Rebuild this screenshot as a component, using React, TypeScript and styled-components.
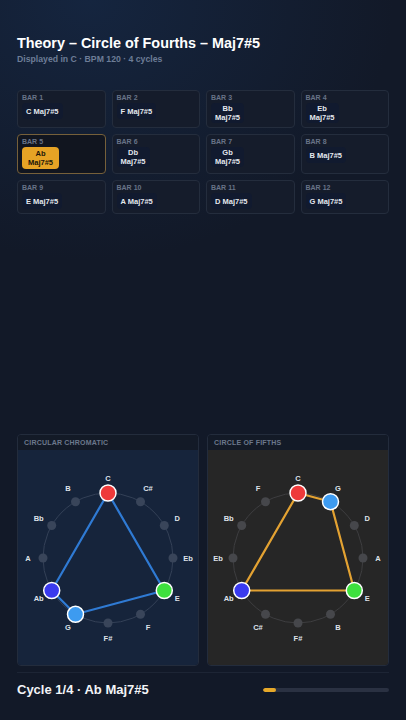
import React from 'react';
import styled, { createGlobalStyle } from 'styled-components';

const GlobalStyle = createGlobalStyle`
  html, body {
    margin: 0;
    padding: 0;
    background: #121928;
  }
  * { box-sizing: border-box; }
`;

type NoteColor = { [note: string]: string };

const BARS = ['C', 'F', 'Bb', 'Eb', 'Ab', 'Db', 'Gb', 'B', 'E', 'A', 'D', 'G'];
const ACTIVE_BAR = 4;
const QUALITY = 'Maj7#5';

const CHROMATIC = ['C', 'C#', 'D', 'Eb', 'E', 'F', 'F#', 'G', 'Ab', 'A', 'Bb', 'B'];
const FIFTHS = ['C', 'G', 'D', 'A', 'E', 'B', 'F#', 'C#', 'Ab', 'Eb', 'Bb', 'F'];

const CHORD_COLORS: NoteColor = {
  C: '#ee3a3a',
  E: '#3ee03e',
  G: '#3d9bf0',
  Ab: '#3a3aee',
};

const Page = styled.div`
  min-height: 100vh;
  display: flex;
  flex-direction: column;
  padding: 34px 17px 0;
  font-family: "Liberation Sans", Arial, sans-serif;
  color: #fff;
  background:
    radial-gradient(ellipse 75% 260px at 22% 0%, #15253f 0%, rgba(18, 25, 40, 0) 100%),
    #121928;
`;

const Title = styled.h1`
  margin: 0;
  font-size: 14.4px;
  line-height: 18px;
  font-weight: 700;
  color: #ffffff;
`;

const Subtitle = styled.div`
  margin-top: 2px;
  font-size: 8.7px;
  line-height: 11px;
  font-weight: 700;
  color: #6d7d97;
`;

const BarGrid = styled.div`
  margin-top: 25px;
  display: grid;
  grid-template-columns: repeat(4, 1fr);
  column-gap: 6px;
  row-gap: 6px;
`;

const BarCard = styled.div<{ $active: boolean }>`
  display: flex;
  flex-direction: column;
  align-items: flex-start;
  padding: 3px 4px 4px;
  border: 1px solid ${p => (p.$active ? '#76603a' : '#242d3d')};
  border-radius: 4px;
  background: ${p => (p.$active ? '#11151f' : '#151c2b')};
`;

const BarLabel = styled.div`
  font-size: 7px;
  line-height: 8px;
  font-weight: 700;
  color: #687387;
  margin-bottom: 1px;
`;

const Chip = styled.div<{ $active: boolean }>`
  min-height: 16px;
  display: flex;
  align-items: center;
  text-align: center;
  padding: ${p => (p.$active ? '2px 6px' : '1px 4px')};
  border-radius: 4px;
  font-size: 7.5px;
  line-height: 9px;
  font-weight: 700;
  color: ${p => (p.$active ? '#1c1608' : '#e4e8ee')};
  background: ${p => (p.$active ? '#e6a325' : '#111a2f')};
`;

const Spacer = styled.div`
  flex: 1;
`;

const Panels = styled.div`
  display: grid;
  grid-template-columns: 1fr 1fr;
  gap: 8px;
`;

const Panel = styled.div`
  height: 232px;
  display: flex;
  flex-direction: column;
  border: 1px solid #232c3c;
  border-radius: 4px;
  overflow: hidden;
`;

const PanelHeader = styled.div`
  height: 16px;
  display: flex;
  align-items: center;
  padding-left: 6px;
  background: #131a27;
  font-size: 7px;
  font-weight: 700;
  letter-spacing: 0.2px;
  color: #6c788c;
`;

const PanelBody = styled.div<{ $bg: string }>`
  flex: 1;
  background: ${p => p.$bg};
  display: flex;
  justify-content: center;
`;

const Footer = styled.div`
  margin-top: 6px;
  border-top: 1px solid #1d2535;
  padding: 9px 0 22px;
  display: flex;
  align-items: center;
  justify-content: space-between;
`;

const FooterText = styled.div`
  font-size: 13px;
  line-height: 16px;
  font-weight: 700;
  color: #f2f4f7;
`;

const Track = styled.div`
  width: 126px;
  height: 4px;
  border-radius: 2px;
  background: #2a3142;
  overflow: hidden;
`;

const Fill = styled.div`
  height: 100%;
  border-radius: 2px;
  background: #e6a829;
`;

interface CircleProps {
  order: string[];
  lineColor: string;
  ringColor: string;
  dotColor: string;
}

const CX = 90;
const CY = 108;
const R = 65;
const LR = 80;

const pos = (i: number, r: number) => {
  const a = (i / 12) * Math.PI * 2;
  return { x: CX + r * Math.sin(a), y: CY - r * Math.cos(a) };
};

const NoteCircle: React.FC<CircleProps> = ({ order, lineColor, ringColor, dotColor }) => {
  const chordIdx = order
    .map((n, i) => (CHORD_COLORS[n] ? i : -1))
    .filter(i => i >= 0);
  const points = chordIdx.map(i => pos(i, R));
  const poly = points.map(p => `${p.x},${p.y}`).join(' ');

  return (
    <svg width="180" height="215" viewBox="0 0 180 215">
      <circle cx={CX} cy={CY} r={R} fill="none" stroke={ringColor} strokeWidth="1" />
      <polygon points={poly} fill="none" stroke={lineColor} strokeWidth="2.2" strokeLinejoin="round" />
      {order.map((note, i) => {
        const p = pos(i, R);
        const l = pos(i, LR);
        const color = CHORD_COLORS[note];
        return (
          <g key={note}>
            {color ? (
              <circle cx={p.x} cy={p.y} r="8" fill={color} stroke="#ffffff" strokeWidth="1.5" />
            ) : (
              <circle cx={p.x} cy={p.y} r="4.5" fill={dotColor} />
            )}
            <text
              x={l.x}
              y={l.y}
              textAnchor="middle"
              dominantBaseline="central"
              fontSize="7.5"
              fontWeight="700"
              fill="#dfe3ea"
              fontFamily="Liberation Sans, Arial, sans-serif"
            >
              {note}
            </text>
          </g>
        );
      })}
    </svg>
  );
};

const App: React.FC = () => {
  const progress = (ACTIVE_BAR + 1) / (BARS.length * 4);

  return (
    <>
      <GlobalStyle />
      <Page>
        <Title>Theory – Circle of Fourths – Maj7#5</Title>
        <Subtitle>Displayed in C · BPM 120 · 4 cycles</Subtitle>

        <BarGrid>
          {BARS.map((root, i) => {
            const active = i === ACTIVE_BAR;
            return (
              <BarCard key={i} $active={active}>
                <BarLabel>BAR {i + 1}</BarLabel>
                <Chip $active={active}>
                  {root.length > 1 ? (
                    <span>
                      {root}
                      <br />
                      {QUALITY}
                    </span>
                  ) : (
                    <span>{root} {QUALITY}</span>
                  )}
                </Chip>
              </BarCard>
            );
          })}
        </BarGrid>

        <Spacer />

        <Panels>
          <Panel>
            <PanelHeader>CIRCULAR CHROMATIC</PanelHeader>
            <PanelBody $bg="#16243b">
              <NoteCircle order={CHROMATIC} lineColor="#2f7ad3" ringColor="#344157" dotColor="#39455a" />
            </PanelBody>
          </Panel>
          <Panel>
            <PanelHeader>CIRCLE OF FIFTHS</PanelHeader>
            <PanelBody $bg="#262626">
              <NoteCircle order={FIFTHS} lineColor="#e3a232" ringColor="#3e3e40" dotColor="#46474b" />
            </PanelBody>
          </Panel>
        </Panels>

        <Footer>
          <FooterText>Cycle 1/4 · Ab Maj7#5</FooterText>
          <Track>
            <Fill style={{ width: `${progress * 100}%` }} />
          </Track>
        </Footer>
      </Page>
    </>
  );
};

export default App;
